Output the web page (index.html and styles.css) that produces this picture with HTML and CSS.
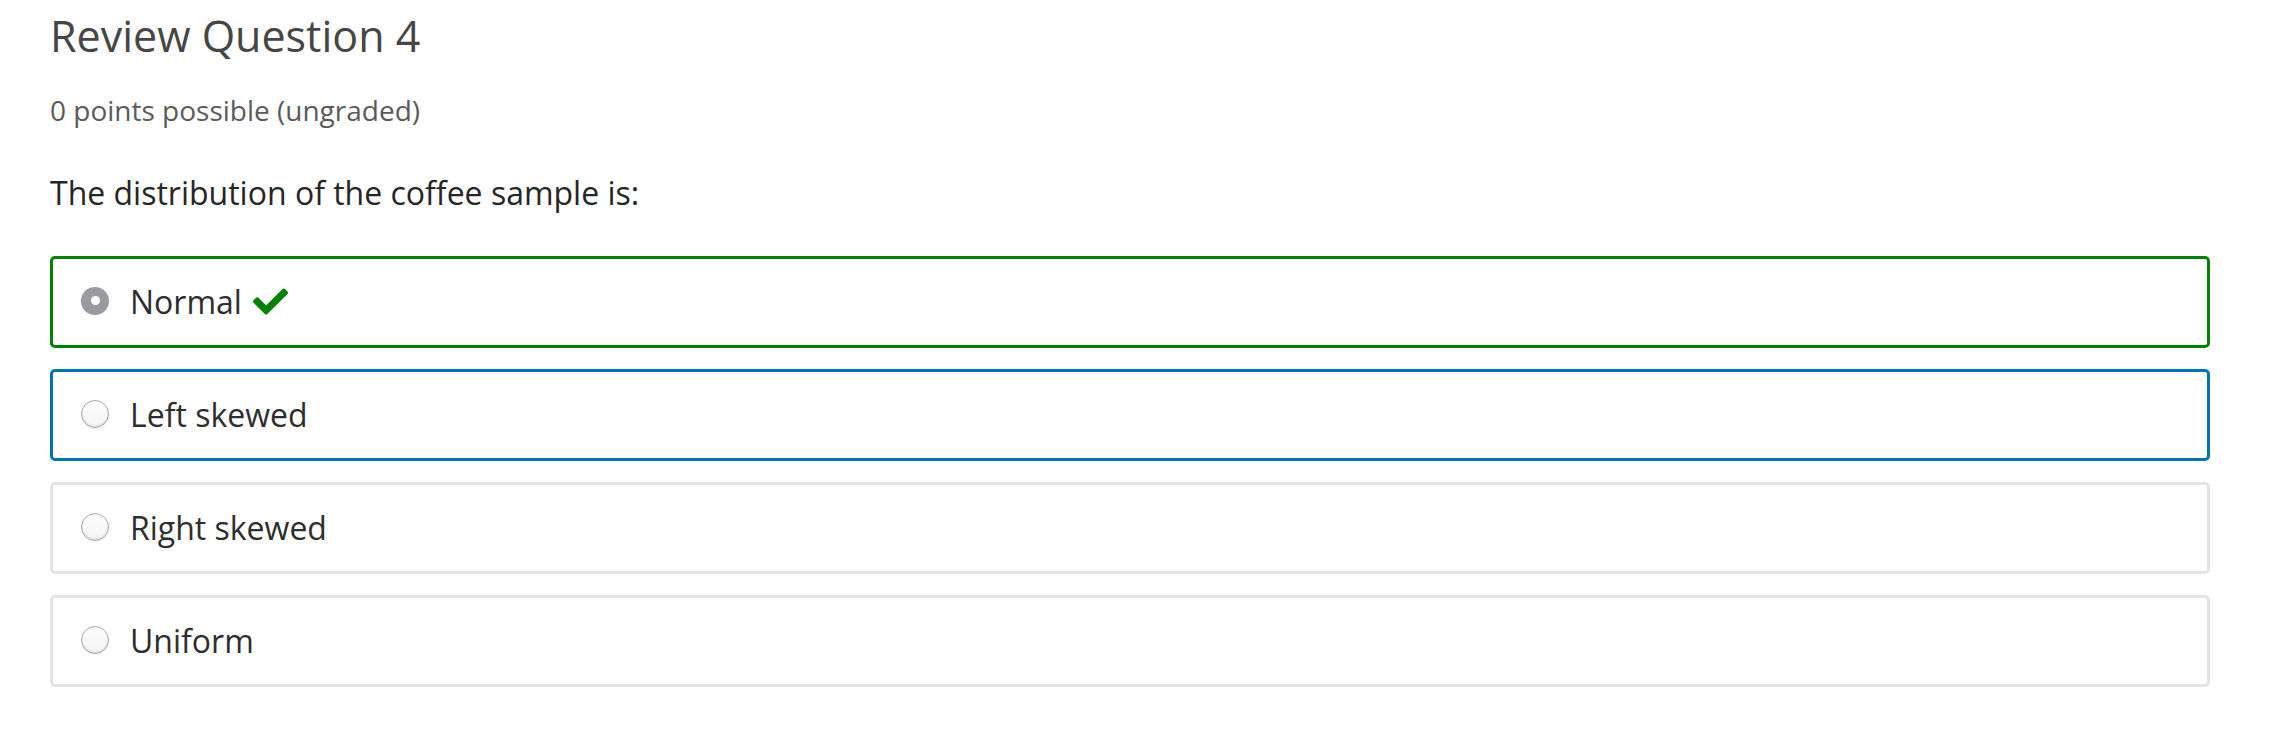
FILE: index.html
```html
<!DOCTYPE html>
<html lang="en">
<head>
<meta charset="utf-8">
<title>Review Question 4</title>
<link rel="stylesheet" href="styles.css">
</head>
<body>
<div class="problem">
  <h2 class="title">Review Question 4</h2>
  <div class="points">0 points possible (ungraded)</div>
  <p class="question">The distribution of the coffee sample is:</p>
  <div class="choices">
    <label class="choice correct">
      <span class="radio checked"></span>
      <span class="label-text">Normal</span>
      <svg class="check" viewBox="0 65 512 382" aria-hidden="true"><path d="M173.898 439.404l-166.4-166.4c-9.997-9.997-9.997-26.206 0-36.204l36.203-36.204c9.997-9.998 26.207-9.998 36.204 0L192 312.69 432.095 72.596c9.997-9.997 26.207-9.997 36.204 0l36.203 36.204c9.997 9.997 9.997 26.206 0 36.204l-294.4 294.401c-9.998 9.997-26.207 9.997-36.204-.001z"/></svg>
    </label>
    <label class="choice focused">
      <span class="radio"></span>
      <span class="label-text">Left skewed</span>
    </label>
    <label class="choice">
      <span class="radio"></span>
      <span class="label-text">Right skewed</span>
    </label>
    <label class="choice">
      <span class="radio"></span>
      <span class="label-text">Uniform</span>
    </label>
  </div>
</div>
</body>
</html>
```
FILE: styles.css
```css
html, body {
  margin: 0;
  padding: 0;
  background: #ffffff;
}

body {
  font-family: "Open Sans", "Liberation Sans", sans-serif;
}

.problem {
  padding: 10px 84px 0 50px;
}

.title {
  margin: 0;
  font-size: 43px;
  line-height: 52px;
  font-weight: 400;
  color: #464646;
}

.points {
  margin-top: 30px;
  font-size: 28px;
  line-height: 36px;
  color: #5b5b5b;
}

.question {
  margin: 45px 0 0;
  font-size: 32px;
  line-height: 40px;
  color: #262626;
}

.choices {
  margin-top: 43px;
  display: flex;
  flex-direction: column;
  gap: 21px;
}

.choice {
  display: flex;
  align-items: center;
  height: 92px;
  box-sizing: border-box;
  border: 3px solid #e4e4e4;
  border-radius: 5px;
  padding-left: 28px;
  font-size: 32px;
  line-height: 40px;
  color: #2e2e2e;
}

.choice.correct {
  border-color: #008100;
}

.choice.focused {
  border-color: #0075b4;
}

.radio {
  flex: none;
  width: 28px;
  height: 28px;
  box-sizing: border-box;
  border-radius: 50%;
  border: 1.5px solid #a9a9a9;
  background: linear-gradient(#ffffff, #f3f3f3);
  box-shadow: inset 0 -1px 2px rgba(0, 0, 0, 0.12), 0 1px 1px rgba(0, 0, 0, 0.06);
  margin-right: 21px;
  margin-top: -3px;
  position: relative;
}

.radio.checked {
  border: none;
  background: #9b9aa0;
  box-shadow: none;
}

.radio.checked::after {
  content: "";
  position: absolute;
  left: 50%;
  top: 50%;
  width: 9px;
  height: 9px;
  margin: -4.5px 0 0 -4.5px;
  border-radius: 50%;
  background: #ffffff;
}

.check {
  width: 35px;
  height: 27px;
  margin-left: 11px;
  margin-top: -2px;
  fill: #008100;
}
```
